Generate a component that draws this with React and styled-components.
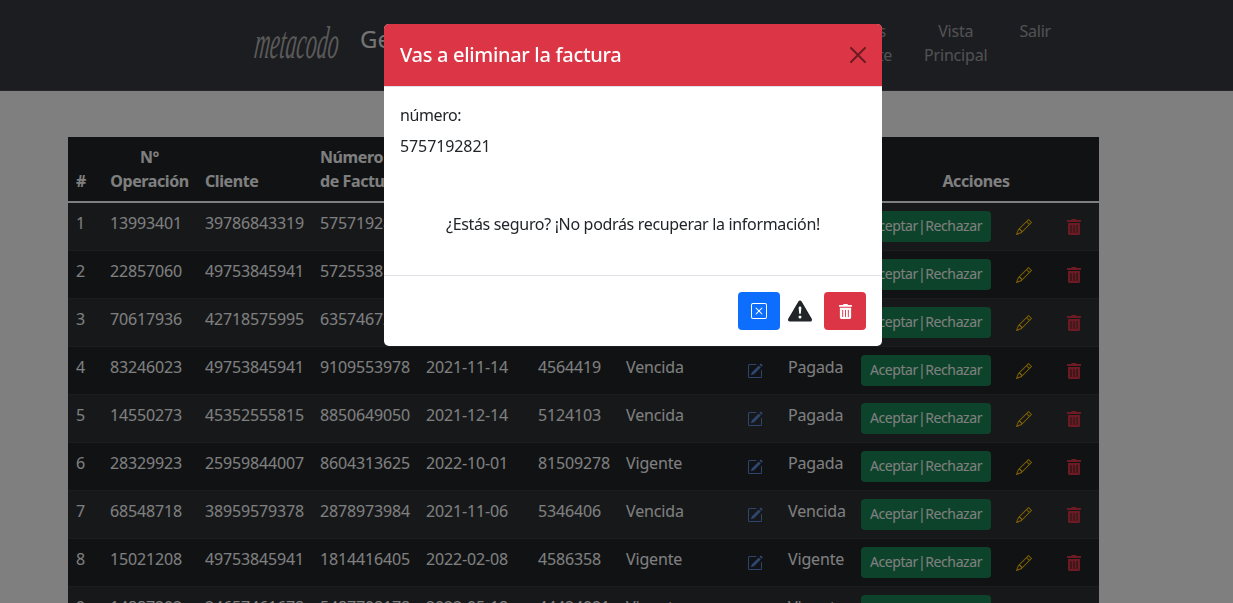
import React from "react";
import styled, { createGlobalStyle } from "styled-components";
import { BsPencil, BsPencilSquare, BsXSquare, BsExclamationTriangleFill } from "react-icons/bs";
import { FaTrashAlt } from "react-icons/fa";

const rows = [
  ["1", "13993401", "39786843319", "5757192821", "2021-10-22", "7412055", "Vigente", "Pagada"],
  ["2", "22857060", "49753845941", "5725538104", "2022-01-17", "3120946", "Vigente", "Pagada"],
  ["3", "70617936", "42718575995", "6357467210", "2021-12-03", "6208471", "Vencida", "Pagada"],
  ["4", "83246023", "49753845941", "9109553978", "2021-11-14", "4564419", "Vencida", "Pagada"],
  ["5", "14550273", "45352555815", "8850649050", "2021-12-14", "5124103", "Vencida", "Pagada"],
  ["6", "28329923", "25959844007", "8604313625", "2022-10-01", "81509278", "Vigente", "Pagada"],
  ["7", "68548718", "38959579378", "2878973984", "2021-11-06", "5346406", "Vencida", "Vencida"],
  ["8", "15021208", "49753845941", "1814416405", "2022-02-08", "4586358", "Vigente", "Vigente"],
  ["9", "14887202", "24657461678", "5487708178", "2022-05-18", "44424091", "Vigente", "Vigente"],
];

const GlobalStyle = createGlobalStyle`
  html, body {
    margin: 0;
    height: 100%;
    overflow: hidden;
    background: #fff;
    font-family: "Noto Sans", "Open Sans", sans-serif;
    font-size: 16px;
    color: #212529;
  }
`;

const Page = styled.div`
  height: 100vh;
  overflow: hidden;
`;

const Navbar = styled.header`
  height: 90px;
  display: flex;
  align-items: flex-start;
  padding: 0 174px 0 255px;
  background: #383a41;
  border-bottom: 1px solid #4a4b50;
`;

const Logo = styled.div`
  width: 85px;
  margin-top: 18px;
  font-family: "Liberation Serif", serif;
  font-style: italic;
  font-size: 46px;
  line-height: 50px;
  color: #b4b4b4;
  transform: scaleX(0.47) skewX(-14deg);
  transform-origin: left center;
  white-space: nowrap;
`;

const Brand = styled.div`
  margin: 23px 0 0 20px;
  font-size: 24px;
  line-height: 32px;
  color: #e8e8e8;
`;

const NavLinks = styled.nav`
  margin-left: auto;
  display: flex;
  gap: 16px;
  padding-top: 19px;
`;

const NavLink = styled.a`
  padding: 0 8px;
  font-size: 16px;
  line-height: 24px;
  letter-spacing: -0.2px;
  text-align: center;
  color: rgba(255, 255, 255, 0.55);
`;

const Content = styled.main`
  padding: 46px 134px 0 68px;
`;

const Table = styled.table`
  width: 1031px;
  table-layout: fixed;
  border-collapse: collapse;
  background: #212529;
  color: #fff;
  font-size: 16px;
  line-height: 24px;
`;

const HeadRow = styled.tr`
  border-bottom: 2px solid #fff;
`;

const Th = styled.th`
  padding: 8px;
  text-align: ${(p) => p.$align || "left"};
  vertical-align: bottom;
  font-weight: 700;
  letter-spacing: -0.4px;
`;

const Row = styled.tr`
  background: ${(p) => (p.$odd ? "#2c3034" : "#212529")};
  border-bottom: 1px solid #373b3e;
`;

const Td = styled.td`
  padding: 8px;
  vertical-align: top;
  white-space: nowrap;
  letter-spacing: -0.15px;
`;

const AcceptButton = styled.button`
  display: block;
  width: 130px;
  height: 31px;
  padding: 0 0 2px;
  border: 0;
  border-radius: 4px;
  background: #198754;
  color: #fff;
  font: inherit;
  font-size: 14px;
  letter-spacing: -0.4px;
`;

const IconCell = styled(Td)`
  color: ${(p) => p.$color};
  text-align: ${(p) => p.$align || "left"};
  font-size: 16px;
  line-height: 0;
  padding-top: 16px;
`;

const Backdrop = styled.div`
  position: fixed;
  inset: 0;
  background: rgba(0, 0, 0, 0.5);
`;

const Modal = styled.section`
  position: fixed;
  top: 24px;
  left: 384px;
  width: 498px;
  background: #fff;
  border-radius: 5px;
  overflow: hidden;
`;

const ModalHeader = styled.div`
  height: 63px;
  display: flex;
  align-items: center;
  justify-content: space-between;
  padding: 0 16px;
  background: #dc3545;
  border-bottom: 1px solid #dee2e6;
  box-sizing: border-box;
`;

const ModalTitle = styled.h5`
  margin: 0 0 1px;
  font-size: 20px;
  font-weight: 500;
  letter-spacing: -0.32px;
  color: #fff;
`;

const CloseButton = styled.svg`
  width: 16px;
  height: 16px;
  opacity: 0.5;
`;

const ModalBody = styled.div`
  height: 188px;
  padding: 16px;
  box-sizing: border-box;
`;

const Paragraph = styled.p`
  margin: 0 0 7px;
  line-height: 24px;
  letter-spacing: ${(p) => p.$spacing || "0"};
`;

const Warning = styled.p`
  margin: 54px 0 0;
  line-height: 24px;
  letter-spacing: -0.33px;
  text-align: center;
`;

const ModalFooter = styled.div`
  height: 71px;
  display: flex;
  align-items: center;
  justify-content: flex-end;
  gap: 8px;
  padding: 0 16px;
  border-top: 1px solid #dee2e6;
  box-sizing: border-box;
`;

const FooterButton = styled.button`
  width: 42px;
  height: 38px;
  display: flex;
  align-items: center;
  justify-content: center;
  padding: 0;
  border: 0;
  border-radius: 4px;
  background: ${(p) => p.$bg};
  color: #fff;
  font-size: ${(p) => p.$iconSize || "16px"};
`;

const WarningIcon = styled(BsExclamationTriangleFill)`
  width: 24px;
  height: 24px;
  margin-right: 4px;
  color: #212529;
`;

const App = () => (
  <Page>
    <GlobalStyle />
    <Navbar>
      <Logo>metacodo</Logo>
      <Brand>Gestión de Facturas</Brand>
      <NavLinks>
        <NavLink>
          Facturas
          <br />
          Pendiente
        </NavLink>
        <NavLink>
          Vista
          <br />
          Principal
        </NavLink>
        <NavLink>Salir</NavLink>
      </NavLinks>
    </Navbar>
    <Content>
      <Table>
        <colgroup>
          {[34, 95, 115, 106, 112, 88, 121, 41, 73, 146, 50, 50].map((w, i) => (
            <col key={i} style={{ width: w }} />
          ))}
        </colgroup>
        <thead>
          <HeadRow>
            <Th>#</Th>
            <Th $align="center">
              N°
              <br />
              Operación
            </Th>
            <Th>Cliente</Th>
            <Th>
              Número
              <br />
              de Factura
            </Th>
            <Th>Fecha</Th>
            <Th>Monto</Th>
            <Th>Estado</Th>
            <Th />
            <Th>Pago</Th>
            <Th colSpan={3} $align="center">
              Acciones
            </Th>
          </HeadRow>
        </thead>
        <tbody>
          {rows.map((r, i) => (
            <Row key={r[0]} $odd={i % 2 === 0}>
              {r.slice(0, 7).map((v, j) => (
                <Td key={j}>{v}</Td>
              ))}
              <IconCell $color="#5f8be0">
                <BsPencilSquare />
              </IconCell>
              <Td>{r[7]}</Td>
              <Td>
                <AcceptButton>Aceptar|Rechazar</AcceptButton>
              </Td>
              <IconCell $color="#ffc107" $align="center">
                <BsPencil />
              </IconCell>
              <IconCell $color="#dc3545" $align="center">
                <FaTrashAlt />
              </IconCell>
            </Row>
          ))}
        </tbody>
      </Table>
    </Content>
    <Backdrop />
    <Modal>
      <ModalHeader>
        <ModalTitle>Vas a eliminar la factura</ModalTitle>
        <CloseButton viewBox="0 0 16 16" fill="#000">
          <path d="M.293.293a1 1 0 0 1 1.414 0L8 6.586 14.293.293a1 1 0 1 1 1.414 1.414L9.414 8l6.293 6.293a1 1 0 0 1-1.414 1.414L8 9.414l-6.293 6.293a1 1 0 0 1-1.414-1.414L6.586 8 .293 1.707a1 1 0 0 1 0-1.414z" />
        </CloseButton>
      </ModalHeader>
      <ModalBody>
        <Paragraph $spacing="-0.4px">número:</Paragraph>
        <Paragraph $spacing="-0.1px">5757192821</Paragraph>
        <Warning>¿Estás seguro? ¡No podrás recuperar la información!</Warning>
      </ModalBody>
      <ModalFooter>
        <FooterButton $bg="#0d6efd">
          <BsXSquare />
        </FooterButton>
        <WarningIcon />
        <FooterButton $bg="#dc3545" $iconSize="15px">
          <FaTrashAlt />
        </FooterButton>
      </ModalFooter>
    </Modal>
  </Page>
);

export default App;
